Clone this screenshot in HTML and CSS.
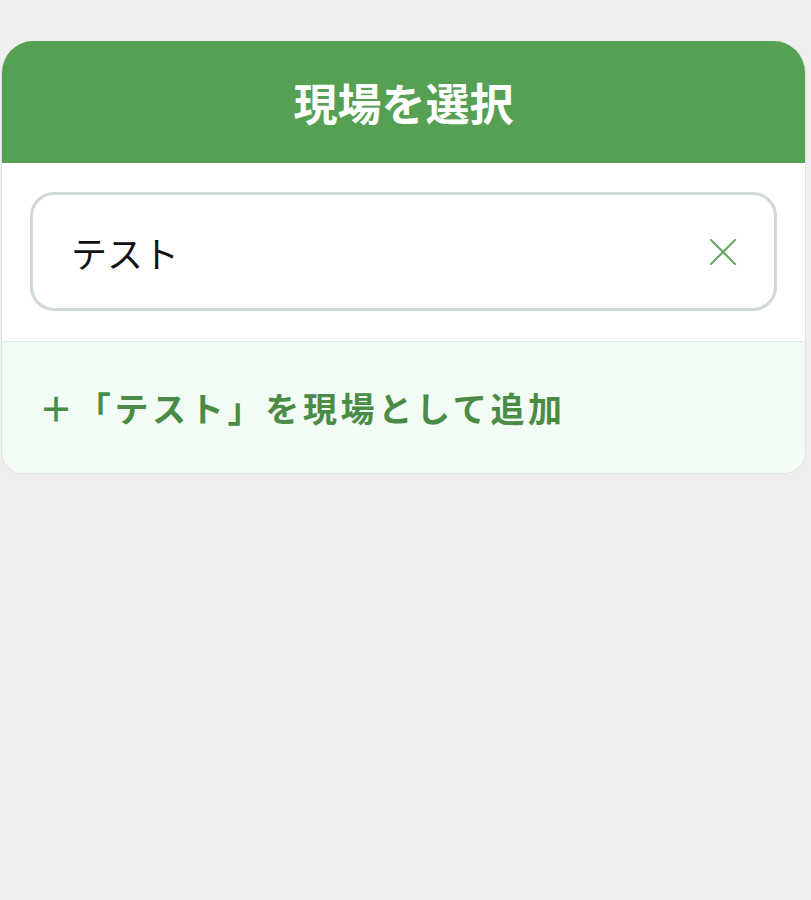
FILE: index.html
```html
<!DOCTYPE html>
<html lang="ja">
<head>
<meta charset="utf-8">
<title>現場を選択</title>
<link rel="stylesheet" href="styles.css">
</head>
<body>
<div class="card">
  <div class="header">現場を選択</div>
  <div class="search">
    <div class="input">
      <span class="value">テスト</span>
      <svg class="clear" width="30" height="30" viewBox="0 0 30 30"><path d="M2 2 L28 28 M28 2 L2 28" stroke="#5fa35c" stroke-width="2.2" stroke-linecap="round" fill="none"/></svg>
    </div>
  </div>
  <div class="add">＋「テスト」を現場として追加</div>
</div>
</body>
</html>
```
FILE: styles.css
```css
html, body {
  margin: 0;
  padding: 0;
  background: #efefef;
  font-family: "Noto Sans CJK JP", "Noto Sans", sans-serif;
}
.card {
  margin: 41px 5px 0 1px;
  background: #ffffff;
  border: 1px solid #dde3e0;
  border-top: none;
  border-radius: 32px 32px 22px 22px;
  overflow: hidden;
}
.header {
  background: #56a053;
  color: #ffffff;
  height: 122px;
  display: flex;
  align-items: center;
  justify-content: center;
  font-size: 44px;
  font-weight: 700;
}
.search {
  padding: 29px 28px 30px 28px;
  border-bottom: 1px solid #dfe5e2;
}
.input {
  height: 113px;
  border: 3px solid #cfd9d6;
  border-radius: 24px;
  display: flex;
  align-items: center;
  justify-content: space-between;
  padding: 0 37px 0 38px;
}
.value {
  font-size: 36px;
  color: #111111;
}
.clear {
  display: block;
  width: 28px;
  height: 28px;
}
.add {
  background: #f3fbf5;
  height: 131px;
  display: flex;
  align-items: center;
  padding-left: 37px;
  font-size: 34px;
  font-weight: 700;
  color: #4a8c45;
  letter-spacing: 3.7px;
}
```
